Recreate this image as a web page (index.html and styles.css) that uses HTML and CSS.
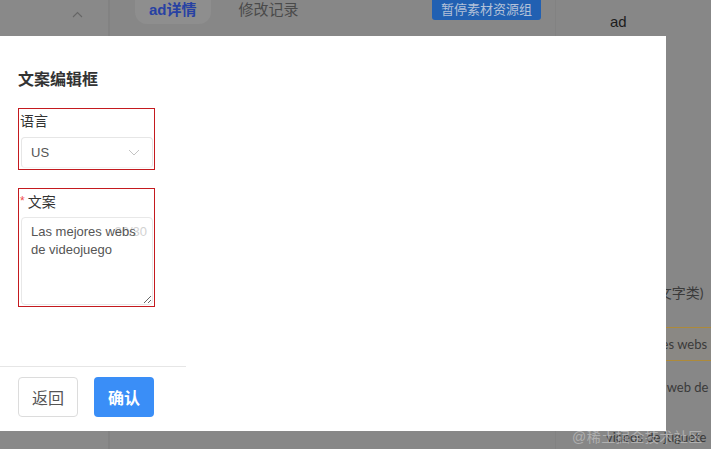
FILE: index.html
```html
<!DOCTYPE html>
<html lang="zh-CN">
  <head>
    <meta charset="UTF-8" />
    <title>文案编辑框</title>
    <link rel="stylesheet" href="styles.css">
  </head>
  <body>
    <div class="page">
      <aside class="sidebar">
        <svg class="caret" width="11" height="7" viewBox="0 0 11 7">
          <path d="M1 6 L5.5 1.5 L10 6" fill="none" stroke="#666" stroke-width="1.1" />
        </svg>
      </aside>

      <main class="content">
        <div class="tabs">
          <span class="tab active">ad详情</span>
          <span class="tab">修改记录</span>
          <button class="pause-btn">暂停素材资源组</button>
        </div>
      </main>

      <section class="side-panel">
        <div class="side-title">ad</div>
        <div class="side-list">
          <div class="side-head">视频标题(文字类)</div>
          <div class="side-row selected">Las mejores webs</div>
          <div class="side-row">Las mejor web de</div>
          <div class="side-row last">videos de juguete</div>
        </div>
      </section>
    </div>

    <div class="watermark">@稀土掘金技术社区</div>

    <div class="modal">
      <div class="modal-main">
        <div class="modal-body">
          <h3 class="modal-title">文案编辑框</h3>

          <div class="field">
            <label class="field-label">语言</label>
            <div class="select">
              <span>US</span>
              <svg width="12" height="7" viewBox="0 0 12 7">
                <path d="M1 1 L6 6 L11 1" fill="none" stroke="#c4c4c4" stroke-width="1" />
              </svg>
            </div>
          </div>

          <div class="field field-text">
            <label class="field-label"><span class="required">*</span>文案</label>
            <div class="textarea-wrap">
              <span class="counter">30/30</span>
              <textarea class="textarea">Las mejores webs de videojuego</textarea>
            </div>
          </div>
        </div>

        <div class="modal-footer">
          <button class="btn btn-back">返回</button>
          <button class="btn btn-ok">确认</button>
        </div>
      </div>
    </div>
  </body>
</html>
```

FILE: styles.css
```css
* {
  box-sizing: border-box;
  font-family: "Liberation Sans", "Noto Sans CJK SC", sans-serif;
}

body {
  margin: 0;
  padding: 0;
  width: 711px;
  height: 449px;
  overflow: hidden;
  background-color: #878787;
  position: relative;
}

.page {
  display: flex;
  height: 449px;
}

.sidebar {
  flex-shrink: 0;
  width: 110px;
  background-color: #898989;
  border-right: 2px solid #828282;
  padding: 11px 0 0 72px;
}

.caret {
  display: block;
}

.content {
  flex-shrink: 0;
  width: 446px;
  background-color: #878787;
  border-right: 1px solid #828282;
}

.tabs {
  display: flex;
  align-items: flex-start;
  padding: 0 14px 0 25px;
}

.tab {
  height: 24px;
  line-height: 20px;
  padding: 0 14px;
  margin-right: 14px;
  font-size: 15px;
  color: #4a4a4a;
}

.tab.active {
  background-color: #8e8e8e;
  border-radius: 0 0 12px 12px;
  color: #2741a3;
  font-weight: bold;
}

.pause-btn {
  margin-left: auto;
  height: 20px;
  padding: 0 9px;
  border: none;
  border-radius: 0 0 3px 3px;
  background-color: #2160b2;
  color: #b3c1d8;
  font-size: 13px;
  line-height: 18px;
}

.side-panel {
  flex: 1;
  min-width: 0;
  overflow: hidden;
  background-color: #878787;
}

.side-title {
  padding: 13px 0 0 54px;
  font-size: 15px;
  line-height: 18px;
  color: #1c1c1c;
}

.side-list {
  margin-top: 251px;
}

.side-row,
.side-head {
  white-space: nowrap;
  font-family: Lato, "Noto Sans CJK SC", sans-serif;
  color: #3a3a3a;
}

.side-head {
  padding-left: 42px;
  height: 22px;
  line-height: 22px;
  font-size: 14px;
  margin-bottom: 23px;
}

.side-row {
  padding-left: 53px;
  height: 34px;
  line-height: 32px;
  font-size: 13px;
  margin-bottom: 10px;
}

.side-row.selected {
  padding-left: 51px;
  background-color: #8a8884;
  border-top: 1px solid #ad8a3a;
  border-bottom: 1px solid #ad8a3a;
}

.side-row.last {
  margin-top: 16px;
  padding-left: 50px;
}

.watermark {
  position: absolute;
  left: 572px;
  top: 428px;
  font-size: 14px;
  line-height: 18px;
  color: rgba(255, 255, 255, 0.35);
  letter-spacing: 0.5px;
}

.modal {
  position: absolute;
  left: 0;
  top: 36px;
  width: 666px;
  height: 395px;
  background-color: #fff;
}

.modal-main {
  width: 186px;
  height: 100%;
  display: flex;
  flex-direction: column;
}

.modal-body {
  flex: 1;
  padding: 33px 0 0 18px;
}

.modal-title {
  margin: 0 0 17px;
  font-size: 16px;
  line-height: 22px;
  font-weight: bold;
  color: #333;
}

.field {
  width: 137px;
  border: 1px solid #c41a1f;
  padding: 2px 1px 1px 1px;
  margin-bottom: 18px;
}

.field-label {
  display: block;
  height: 20px;
  line-height: 20px;
  font-size: 14px;
  color: #333;
  margin-bottom: 6px;
}

.required {
  color: #f04b4b;
  font-size: 12px;
  margin-right: 3px;
  vertical-align: 2px;
}

.select {
  margin-left: 1px;
  height: 31px;
  display: flex;
  align-items: center;
  justify-content: space-between;
  padding: 0 12px 0 9px;
  border: 1px solid #e6e6e6;
  border-bottom-color: #f2f2f2;
  border-radius: 4px;
  font-size: 13px;
  color: #555;
}

.textarea-wrap {
  position: relative;
  margin-left: 1px;
}

.counter {
  position: absolute;
  right: 6px;
  top: 6px;
  font-size: 13px;
  line-height: 18px;
  color: #d2d2d2;
}

.textarea {
  display: block;
  width: 100%;
  height: 88px;
  padding: 5px 10px 0 9px;
  border: 1px solid #e8e8e8;
  border-radius: 4px;
  background: transparent;
  position: relative;
  font-size: 13px;
  line-height: 18px;
  color: #555;
  resize: vertical;
  outline: none;
}

.modal-footer {
  height: 65px;
  border-top: 1px solid #e6e6e6;
  padding: 10px 0 0 18px;
  display: flex;
  gap: 16px;
}

.btn {
  width: 60px;
  height: 40px;
  border-radius: 4px;
  font-size: 16px;
  cursor: pointer;
}

.btn-back {
  background: #fff;
  border: 1px solid #dcdcdc;
  color: #555;
}

.btn-ok {
  background: #3a8ef7;
  border: none;
  color: #fff;
  font-weight: bold;
}
```
